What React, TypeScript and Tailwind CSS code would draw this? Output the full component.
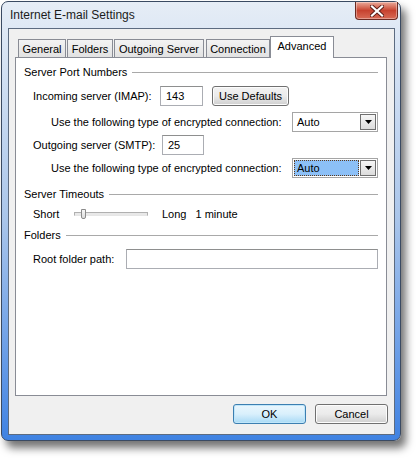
const font = { fontFamily: '"Liberation Sans", Arial, sans-serif' };

function GroupHeader({ title }: { title: string }) {
  return (
    <div className="flex h-[16px] items-center pl-[8px] pr-[8px]">
      <span className="whitespace-nowrap">{title}</span>
      <div className="ml-[5px] h-px flex-1 bg-[#a9a9a9]" />
    </div>
  );
}

function TextBox({ value, className }: { value?: string; className: string }) {
  return (
    <div className={`flex h-[20px] items-center border border-[#abadb3] border-t-[#8e8f8f] bg-white px-[5px] ${className}`}>
      {value}
    </div>
  );
}

function Combo({ focused }: { focused?: boolean }) {
  return (
    <div className="flex h-[20px] w-[86px] items-center border border-[#a5a5a5] bg-white p-[1px]">
      <div
        className={`flex h-full flex-1 items-center pl-[2px] ${
          focused ? 'border border-dotted border-[#5b3a1e] bg-[#8cc0f7]' : 'pl-[3px]'
        }`}
      >
        Auto
      </div>
      <div className="ml-[1px] flex h-full w-[16px] items-center justify-center border border-[#6f6f6f] bg-gradient-to-b from-[#f6f6f6] to-[#dcdcdc]">
        <svg width="7" height="4" viewBox="0 0 7 4">
          <path d="M0 0h7L3.5 4z" fill="#000" />
        </svg>
      </div>
    </div>
  );
}

function PushButton({ label, className, isDefault }: { label: string; className: string; isDefault?: boolean }) {
  return (
    <div
      className={`flex h-[20px] items-center justify-center rounded-[3px] border ${
        isDefault
          ? 'border-[#3c7fb1] bg-gradient-to-b from-[#eaf6fd] via-[#d9f0fc] to-[#a7d9f5] shadow-[inset_0_0_0_1px_#c0e6fa]'
          : 'border-[#707070] bg-gradient-to-b from-[#f2f2f2] via-[#ebebeb] to-[#cfcfcf] shadow-[inset_0_0_0_1px_#fcfcfc]'
      } ${className}`}
    >
      {label}
    </div>
  );
}

const tabs = [
  { name: 'General', w: 'w-[48px]', ml: 'ml-[3px]' },
  { name: 'Folders', w: 'w-[46px]', ml: 'ml-[1px]' },
  { name: 'Outgoing Server', w: 'w-[90px]', ml: 'ml-[1px]' },
  { name: 'Connection', w: 'w-[64px]', ml: 'ml-[2px]' },
];

export default function App() {
  return (
    <div className="h-[458px] w-[420px] bg-white text-[11px] text-black" style={font}>
      <div className="ml-px pt-px">
        <div className="relative flex h-[440px] w-[400px] flex-col rounded-[7px] border border-[#3a4a62] bg-gradient-to-b from-[#e6edf6] via-[#a9c5ea] to-[#3f82e2] pl-[6px] pr-[5px] pb-[5px] shadow-[5px_7px_9px_rgba(0,0,0,0.55)]">
          <div className="flex h-[26px] items-center pl-[2px] text-[12px] text-[#1b1b1b]">
            Internet E-mail Settings
          </div>
          <div className="absolute right-[2px] top-0 flex h-[18px] w-[43px] items-center justify-center rounded-b-[4px] border border-t-0 border-[#6b2a22] bg-gradient-to-b from-[#e9a99a] via-[#c7422f] to-[#d86a55] shadow-[inset_0_0_0_1px_rgba(255,255,255,0.35)]">
            <svg width="14" height="12" viewBox="0 0 14 12">
              <path d="M2 1.5l10 9M12 1.5l-10 9" stroke="#5a1d17" strokeWidth="4" strokeLinecap="square" />
              <path d="M2 1.5l10 9M12 1.5l-10 9" stroke="#ffffff" strokeWidth="2.2" strokeLinecap="square" />
            </svg>
          </div>

          <div className="flex flex-1 flex-col border border-[#5c6b80] bg-[#f0f0f0] pl-[6px] pr-[6px]">
            <div className="mt-[6px] flex h-[22px] items-end">
              {tabs.map((t) => (
                <div
                  key={t.name}
                  className={`flex h-[18px] items-center justify-center border border-b-0 border-[#898c95] bg-gradient-to-b from-[#f3f3f3] to-[#e2e2e2] pt-[1px] ${t.w} ${t.ml}`}
                >
                  {t.name}
                </div>
              ))}
              <div className="relative z-10 -mb-px flex h-[22px] w-[64px] items-center justify-center border border-b-0 border-[#898c95] bg-white pb-[2px]">
                Advanced
              </div>
            </div>

            <div className="flex h-[339px] w-[372px] flex-col border border-[#898c95] bg-white pt-[6px]">
              <GroupHeader title="Server Port Numbers" />

              <div className="mt-[6px] flex items-center pl-[17px]">
                <span className="w-[127px]">Incoming server (IMAP):</span>
                <TextBox value="143" className="w-[43px]" />
                <PushButton label="Use Defaults" className="ml-[9px] w-[77px]" />
              </div>

              <div className="mt-[6px] flex items-center justify-between pl-[35px] pr-[8px]">
                <span>Use the following type of encrypted connection:</span>
                <Combo />
              </div>

              <div className="mt-[3px] flex items-center pl-[17px]">
                <span className="w-[129px]">Outgoing server (SMTP):</span>
                <TextBox value="25" className="w-[42px]" />
              </div>

              <div className="mt-[3px] flex items-center justify-between pl-[35px] pr-[8px]">
                <span>Use the following type of encrypted connection:</span>
                <Combo focused />
              </div>

              <div className="mt-[8px]">
                <GroupHeader title="Server Timeouts" />
              </div>

              <div className="mt-[4px] flex h-[16px] items-center pl-[17px]">
                <span className="w-[41px]">Short</span>
                <div className="relative h-[4px] w-[74px] border border-[#b0b0b0] border-b-[#e6e6e6] bg-[#e8e8e8]">
                  <div className="absolute -top-[4px] left-[6px] h-[10px] w-[5px] rounded-b-[2px] border border-[#8a8a8a] bg-gradient-to-b from-[#f6f6f6] to-[#dcdcdc]" />
                </div>
                <span className="ml-[14px]">Long</span>
                <span className="ml-[9px]">1 minute</span>
              </div>

              <div className="mt-[5px]">
                <GroupHeader title="Folders" />
              </div>

              <div className="mt-[6px] flex items-center pl-[17px] pr-[8px]">
                <span className="w-[93px]">Root folder path:</span>
                <TextBox className="flex-1" />
              </div>
            </div>

            <div className="mt-[8px] flex justify-end gap-[9px]">
              <PushButton label="OK" className="w-[73px]" isDefault />
              <PushButton label="Cancel" className="w-[73px]" />
            </div>
          </div>
        </div>
      </div>
    </div>
  );
}
